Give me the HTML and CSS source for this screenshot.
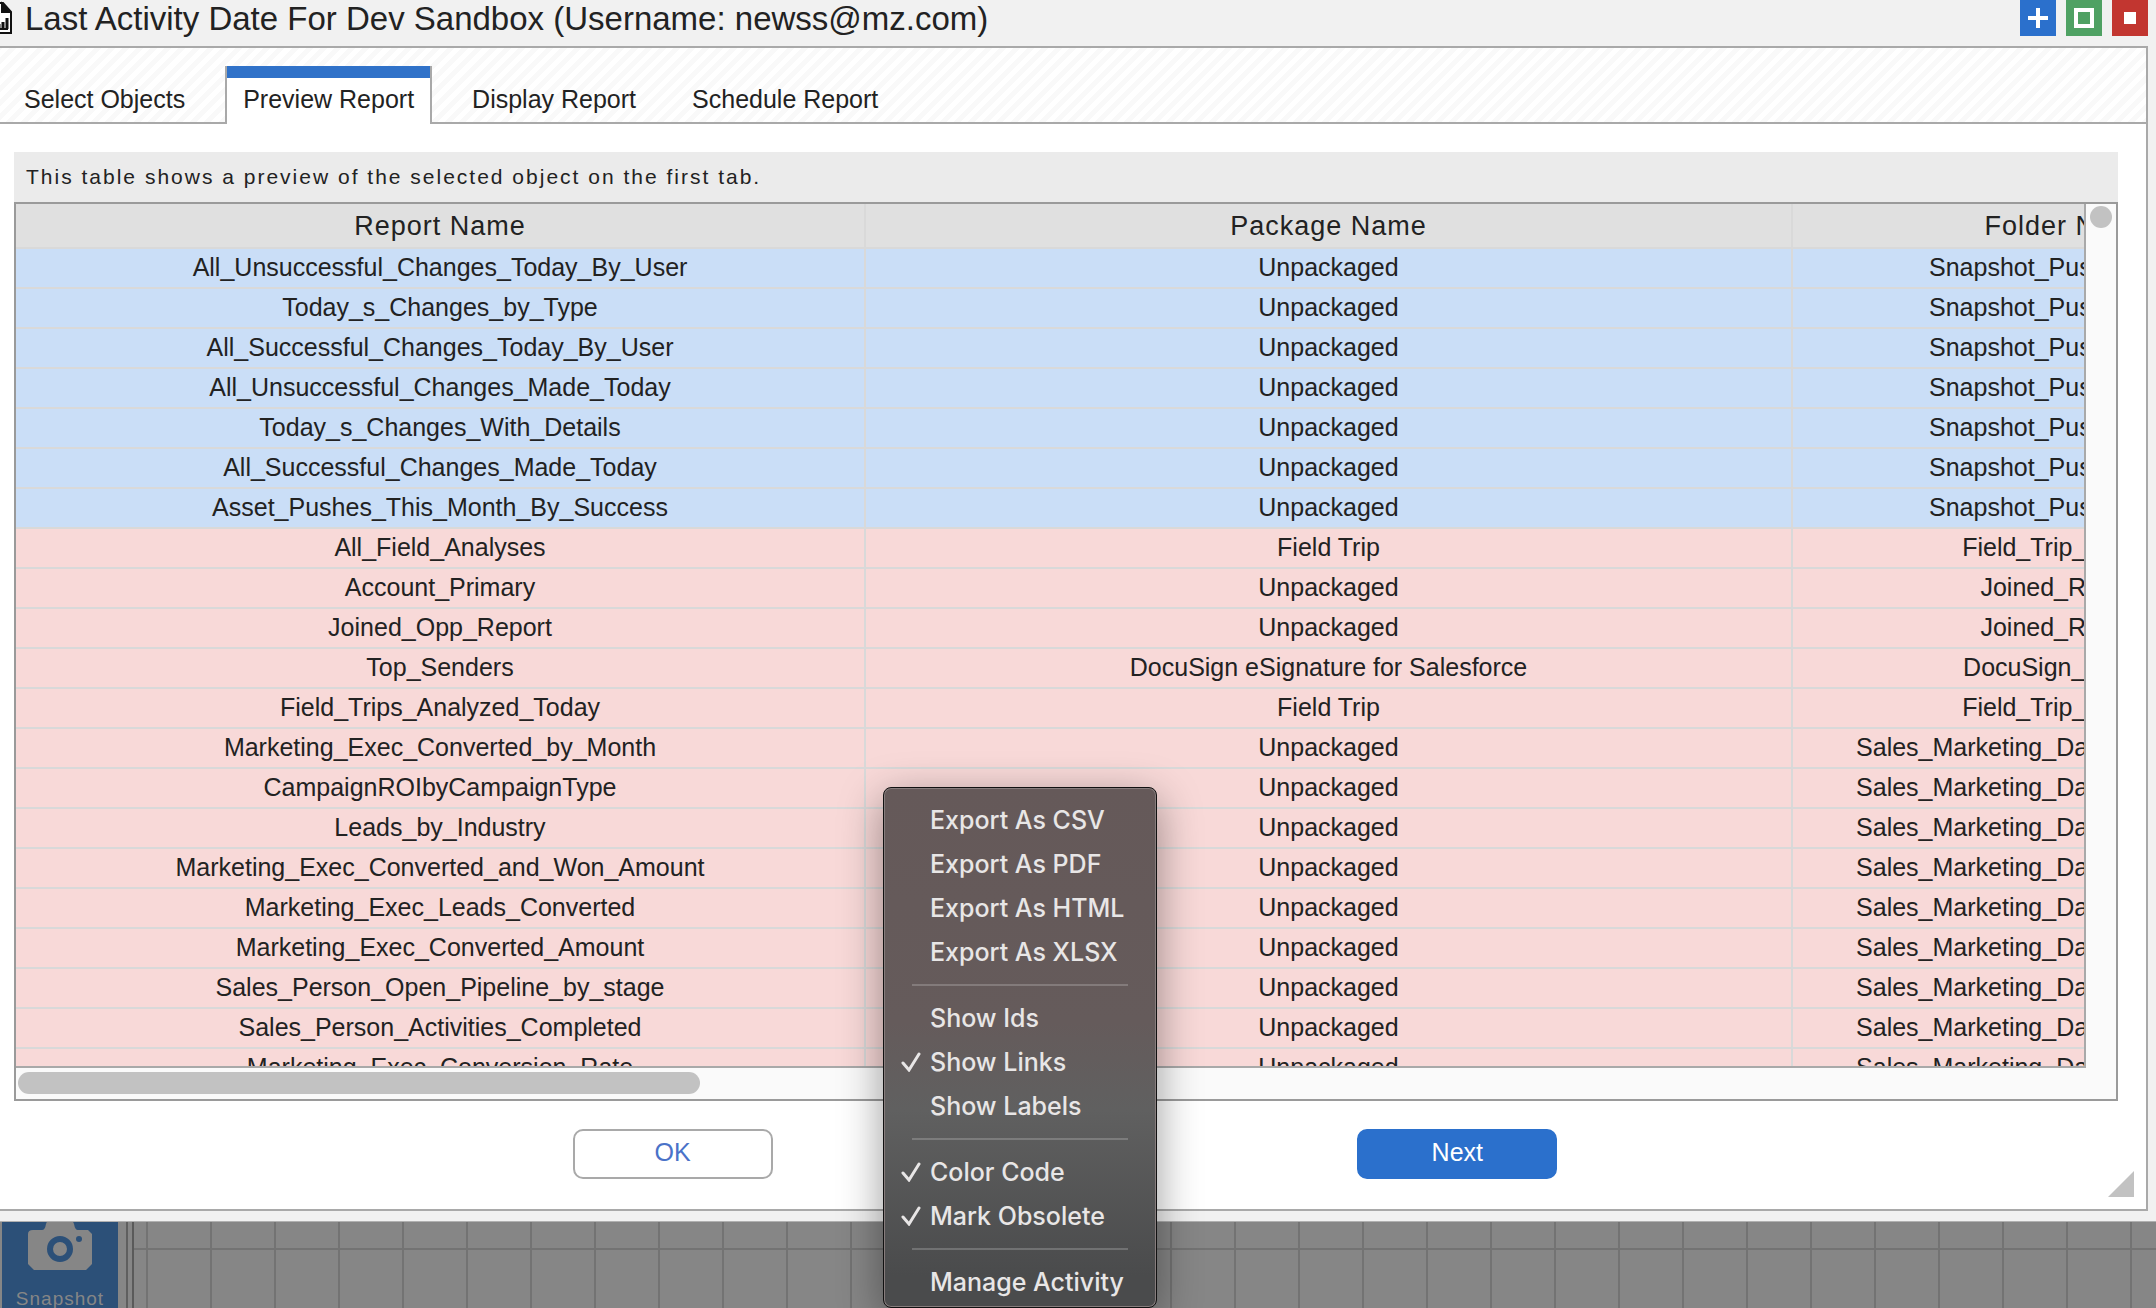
FILE: index.html
```html
<!DOCTYPE html>
<html lang="en">
<head>
<meta charset="utf-8">
<title>Last Activity Date For Dev Sandbox</title>
<link rel="stylesheet" href="styles.css">
</head>
<body>
<section class="dialog">
  <header class="titlebar">
    <svg class="doc-icon" viewBox="0 0 26 34" width="26" height="34" aria-hidden="true">
      <path d="M2 2H17L25 11V32H2Z" fill="#fff" stroke="#111" stroke-width="2"/>
      <path d="M16 3V11H23Z" fill="#111" stroke="#111" stroke-width="2"/>
      <path d="M8 28V20M13 28V23M17 28V21M21 28V17" stroke="#111" stroke-width="3"/>
      <path d="M6 28H22" stroke="#111" stroke-width="2"/>
    </svg>
    <h1 class="title">Last Activity Date For Dev Sandbox (Username: newss@mz.com)</h1>
    <div class="window-buttons">
      <button class="win win-add" aria-label="Add"><svg viewBox="0 0 36 36"><path d="M8 18H28M18 8V28" stroke="#fff" stroke-width="4"/></svg></button>
      <button class="win win-max" aria-label="Maximize"><svg viewBox="0 0 36 36"><rect x="10" y="10" width="16" height="16" fill="none" stroke="#fff" stroke-width="4"/></svg></button>
      <button class="win win-close" aria-label="Close"><svg viewBox="0 0 36 36"><rect x="12" y="12" width="12" height="12" fill="#fff"/></svg></button>
    </div>
  </header>
  <main class="panel">
    <nav class="tabs">
      <button class="tab">Select Objects</button>
      <button class="tab tab-active">Preview Report</button>
      <button class="tab">Display Report</button>
      <button class="tab">Schedule Report</button>
    </nav>
    <div class="content">
      <p class="note">This table shows a preview of the selected object on the first tab.</p>
      <div class="frame">
        <div class="view">
          <table class="report">
            <colgroup><col class="c1"><col class="c2"><col class="c3"></colgroup>
            <thead><tr><th>Report Name</th><th>Package Name</th><th>Folder Name</th></tr></thead>
            <tbody class="recent">
              <tr><td>All_Unsuccessful_Changes_Today_By_User</td><td>Unpackaged</td><td>Snapshot_Push_Reports</td></tr>
              <tr><td>Today_s_Changes_by_Type</td><td>Unpackaged</td><td>Snapshot_Push_Reports</td></tr>
              <tr><td>All_Successful_Changes_Today_By_User</td><td>Unpackaged</td><td>Snapshot_Push_Reports</td></tr>
              <tr><td>All_Unsuccessful_Changes_Made_Today</td><td>Unpackaged</td><td>Snapshot_Push_Reports</td></tr>
              <tr><td>Today_s_Changes_With_Details</td><td>Unpackaged</td><td>Snapshot_Push_Reports</td></tr>
              <tr><td>All_Successful_Changes_Made_Today</td><td>Unpackaged</td><td>Snapshot_Push_Reports</td></tr>
              <tr><td>Asset_Pushes_This_Month_By_Success</td><td>Unpackaged</td><td>Snapshot_Push_Reports</td></tr>
            </tbody>
            <tbody class="obsolete">
              <tr><td>All_Field_Analyses</td><td>Field Trip</td><td>Field_Trip_Reports</td></tr>
              <tr><td>Account_Primary</td><td>Unpackaged</td><td>Joined_Reports</td></tr>
              <tr><td>Joined_Opp_Report</td><td>Unpackaged</td><td>Joined_Reports</td></tr>
              <tr><td>Top_Senders</td><td>DocuSign eSignature for Salesforce</td><td>DocuSign_Reports</td></tr>
              <tr><td>Field_Trips_Analyzed_Today</td><td>Field Trip</td><td>Field_Trip_Reports</td></tr>
              <tr><td>Marketing_Exec_Converted_by_Month</td><td>Unpackaged</td><td>Sales_Marketing_Dashboard_Reports</td></tr>
              <tr><td>CampaignROIbyCampaignType</td><td>Unpackaged</td><td>Sales_Marketing_Dashboard_Reports</td></tr>
              <tr><td>Leads_by_Industry</td><td>Unpackaged</td><td>Sales_Marketing_Dashboard_Reports</td></tr>
              <tr><td>Marketing_Exec_Converted_and_Won_Amount</td><td>Unpackaged</td><td>Sales_Marketing_Dashboard_Reports</td></tr>
              <tr><td>Marketing_Exec_Leads_Converted</td><td>Unpackaged</td><td>Sales_Marketing_Dashboard_Reports</td></tr>
              <tr><td>Marketing_Exec_Converted_Amount</td><td>Unpackaged</td><td>Sales_Marketing_Dashboard_Reports</td></tr>
              <tr><td>Sales_Person_Open_Pipeline_by_stage</td><td>Unpackaged</td><td>Sales_Marketing_Dashboard_Reports</td></tr>
              <tr><td>Sales_Person_Activities_Completed</td><td>Unpackaged</td><td>Sales_Marketing_Dashboard_Reports</td></tr>
              <tr><td>Marketing_Exec_Conversion_Rate</td><td>Unpackaged</td><td>Sales_Marketing_Dashboard_Reports</td></tr>
            </tbody>
          </table>
        </div>
        <div class="track-y"><div class="thumb-y"></div></div>
        <div class="track-x"><div class="thumb-x"></div></div>
      </div>
    </div>
    <footer class="actions">
      <button class="btn">OK</button>
      <button class="btn btn-primary">Next</button>
    </footer>
    <svg class="resize" viewBox="0 0 26 26" width="26" height="26" aria-hidden="true"><path d="M26 0V26H0Z" fill="#c2c2c2"/></svg>
  </main>
</section>
<section class="desktop">
  <aside class="sidebar">
    <button class="tile">
      <svg viewBox="0 0 64 52" width="64" height="52" aria-hidden="true">
        <path d="M18 6Q20 0 25 0H39Q44 0 46 6Q47 12 50 12H60L64 16V46L58 52H6L0 46V16Q0 12 5 12H14Q17 12 18 6Z" fill="#868686"/>
        <circle cx="32" cy="31" r="10" fill="none" stroke="#2c5078" stroke-width="6"/>
        <circle cx="51" cy="21" r="3" fill="#2c5078"/>
      </svg>
      <span>Snapshot</span>
    </button>
  </aside>
  <div class="grid"></div>
</section>
<div class="menu" role="menu">
  <button class="item" role="menuitem">Export As CSV</button>
  <button class="item" role="menuitem">Export As PDF</button>
  <button class="item" role="menuitem">Export As HTML</button>
  <button class="item" role="menuitem">Export As XLSX</button>
  <hr class="sep">
  <button class="item" role="menuitem">Show Ids</button>
  <button class="item" role="menuitem"><svg class="check" viewBox="0 0 20 20"><path d="M2 11L8 18L18 2"/></svg>Show Links</button>
  <button class="item" role="menuitem">Show Labels</button>
  <hr class="sep">
  <button class="item" role="menuitem"><svg class="check" viewBox="0 0 20 20"><path d="M2 11L8 18L18 2"/></svg>Color Code</button>
  <button class="item" role="menuitem"><svg class="check" viewBox="0 0 20 20"><path d="M2 11L8 18L18 2"/></svg>Mark Obsolete</button>
  <hr class="sep">
  <button class="item" role="menuitem">Manage Activity</button>
</div>
</body>
</html>
```
FILE: styles.css
```css
* { box-sizing: border-box; }
body {
  margin: 0;
  height: 100vh;
  overflow: hidden;
  position: relative;
  display: flex;
  flex-direction: column;
  background: #868686;
  color: #222;
  font-family: "Liberation Sans", Arial, sans-serif;
  font-size: 25px;
}
button { font: inherit; color: inherit; margin: 0; padding: 0; border: 0; background: none; }

.dialog {
  flex: 1;
  min-height: 0;
  display: flex;
  flex-direction: column;
  margin-left: -14px;
  padding: 0 8px 10px 0;
  background: #f1f1f1;
  border-bottom: 1px solid #b0b0b0;
}
.titlebar { display: flex; align-items: flex-start; height: 46px; }
.doc-icon { flex: none; margin: 1px 13px 0 0; }
.title { flex: 1; margin: 0; font-size: 33px; font-weight: 400; line-height: 37px; white-space: nowrap; }
.window-buttons { display: flex; gap: 10px; }
.win { width: 36px; height: 36px; }
.win svg { display: block; }
.win-add { background: #2b70cc; }
.win-max { background: #4fa163; }
.win-close { background: #c23630; }

.panel {
  position: relative;
  flex: 1;
  min-height: 0;
  display: flex;
  flex-direction: column;
  background: #fff;
  border: 2px solid #a9a9a9;
}
.tabs {
  flex: none;
  display: flex;
  gap: 24px;
  height: 76px;
  padding: 18px 0 0 20px;
  border-bottom: 2px solid #a9a9a9;
  background: repeating-linear-gradient(135deg, #fff 0 5px, #f9f9f9 5px 10px);
}
.tab { height: 58px; padding: 8px 16px 0; line-height: 48px; }
.tab-active {
  background: #fff;
  border: 2px solid #a9a9a9;
  border-width: 0 2px;
  box-shadow: inset 0 12px #3072c9;
}
.content { flex: 1; min-height: 0; display: flex; flex-direction: column; padding: 28px 28px 0 26px; }
.note { margin: 0; padding: 0 12px; background: #ebebeb; font-size: 21px; letter-spacing: 2px; line-height: 50px; }
.frame {
  flex: 1;
  min-height: 0;
  display: grid;
  grid-template: minmax(0, 1fr) 31px / minmax(0, 1fr) 30px;
  background: #fafafa;
  border: 2px solid #9a9a9a;
}
.view { overflow: hidden; border: 2px solid #a9a9a9; border-width: 0 2px 2px 0; }
.report { table-layout: fixed; width: 2329px; border-collapse: separate; border-spacing: 0; text-align: center; }
.c1 { width: 850px; }
.c2 { width: 927px; }
.c3 { width: 552px; }
th, td { border: 2px solid #d9d9d9; border-width: 0 2px 2px 0; }
th { height: 45px; padding: 2px 0 0; background: #e0e0e0; font-size: 27px; font-weight: 400; letter-spacing: 1px; line-height: 41px; }
td { height: 40px; padding: 0 0 2px; line-height: 36px; }
.recent { background: #cadef7; }
.obsolete { background: #f8d9d8; }
.track-y { padding: 2px 4px; }
.thumb-y { width: 22px; height: 22px; border-radius: 11px; background: #c2c2c2; }
.track-x { padding: 4px 2px; }
.thumb-x { width: 33%; height: 22px; border-radius: 11px; background: #c2c2c2; }

.actions { flex: none; display: flex; justify-content: space-evenly; margin-right: 4px; padding: 28px 0 30px; }
.btn { width: 200px; height: 50px; padding-bottom: 3px; border: 2px solid #a9a9a9; border-radius: 10px; background: #fff; color: #4a72c8; }
.btn-primary { border-color: #2b70cc; background: #2b70cc; color: #fff; }
.resize { position: absolute; right: 12px; bottom: 12px; }

.desktop { flex: none; display: flex; height: 86px; overflow: hidden; }
.sidebar { flex: none; width: 134px; padding-left: 2px; border-right: 2px solid #5a5a5a; box-shadow: inset -4px 0 #868686, inset -6px 0 #5f5f5f; }
.tile { width: 116px; height: 100px; background: #2c5078; color: #868686; font-size: 19px; letter-spacing: 1px; display: flex; flex-direction: column; align-items: center; }
.tile svg { flex: none; margin: -4px 0 18px; }
.grid {
  flex: 1;
  background:
    repeating-linear-gradient(90deg, transparent 0 12px, #737373 12px 14px, transparent 14px 64px),
    linear-gradient(#737373, #737373) 0 26px / 100% 2px no-repeat;
}

.menu {
  position: absolute;
  left: 883px;
  top: 787px;
  width: 274px;
  padding: 10px 0 3px;
  border: 1px solid #111;
  border-radius: 8px;
  background: linear-gradient(#655959 0, #655b5b 45%, #606060 62%, #4a4b4c 94%);
  box-shadow: inset 0 0 0 1px #877d7d, 0 12px 44px rgba(0, 0, 0, 0.4);
  color: #e8e6e6;
  font-family: Inter, sans-serif;
  font-size: 25px;
  font-weight: 500;
}
.item { position: relative; display: block; width: 100%; height: 44px; padding-left: 46px; text-align: left; white-space: nowrap; }
.check { position: absolute; left: 17px; top: 12px; width: 20px; height: 20px; fill: none; stroke: #e8e6e6; stroke-width: 3; stroke-linecap: round; }
.sep { height: 2px; margin: 10px 28px; border: 0; background: rgba(255, 255, 255, 0.2); }
```
